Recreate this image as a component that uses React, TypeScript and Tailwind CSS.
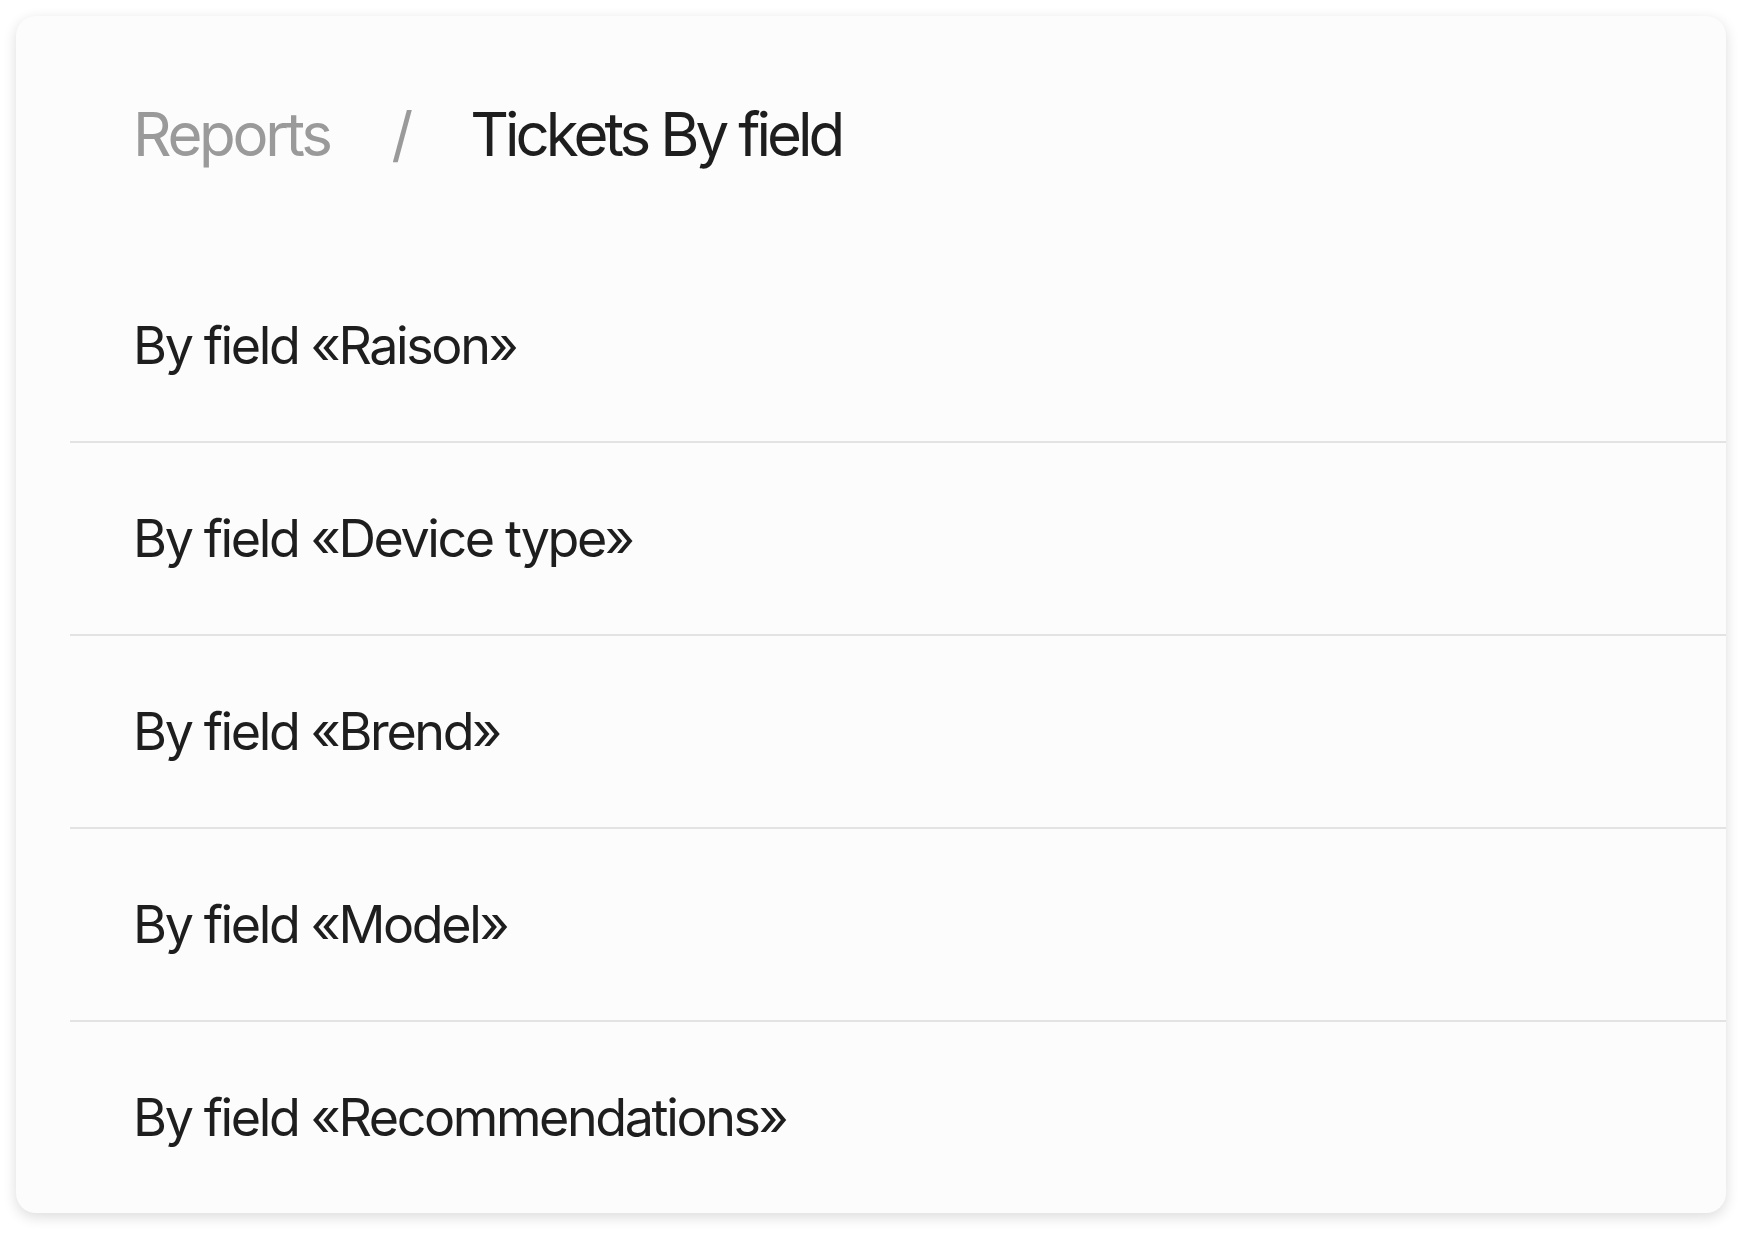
import React from "react";

const rows = [
  "By field «Raison»",
  "By field «Device type»",
  "By field «Brend»",
  "By field «Model»",
  "By field «Recommendations»",
];

export default function App() {
  return (
    <div className="w-[1750px] h-[1238px] bg-white pt-[16px] pl-[16px]" style={{ fontFamily: "Inter, 'Noto Sans', sans-serif" }}>
      <div className="w-[1710px] h-[1197px] bg-[#fcfcfc] rounded-[20px] shadow-[0_4px_14px_rgba(0,0,0,0.14)] overflow-hidden flex flex-col">
        <div className="flex items-center pt-[88px] pb-[86px] pl-[117px] text-[60px] leading-[60px]">
          <span className="text-[#9a9a9a] tracking-[-0.055em]">Reports</span>
          <span className="text-[#9a9a9a] ml-[62px]">/</span>
          <span className="text-[#1e1e1e] ml-[57px] tracking-[-0.066em]">Tickets By field</span>
        </div>
        <div className="ml-[54px] flex flex-col">
          {rows.map((r, i) => (
            <div
              key={r}
              className={
                i < rows.length - 1
                  ? "h-[193px] flex items-center border-b-2 border-[#e3e3e3] pl-[63px]"
                  : "h-[191px] flex items-center pl-[63px]"
              }
            >
              <span className="text-[52px] leading-[52px] text-[#1e1e1e] tracking-[-0.046em]">{r}</span>
            </div>
          ))}
        </div>
      </div>
    </div>
  );
}
